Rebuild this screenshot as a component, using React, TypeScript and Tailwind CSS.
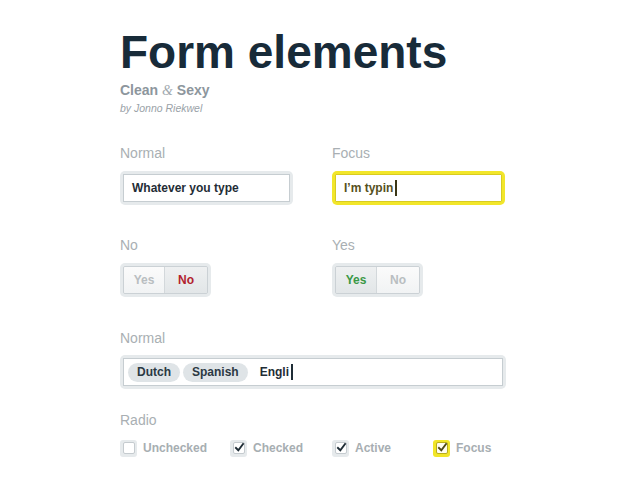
import React from "react";

function Label({ children }: { children: React.ReactNode }) {
  return <div className="text-[14px] leading-[16px] text-[#a9afb3]">{children}</div>;
}

function Caret({ color = "bg-[#1f2d36]" }: { color?: string }) {
  return <span className={`ml-[2px] inline-block h-[16px] w-[2px] ${color}`} />;
}

function Toggle({ value }: { value: "yes" | "no" }) {
  const on = "bg-gradient-to-b from-[#eef0f1] to-[#e2e6e8]";
  const off = "bg-gradient-to-b from-[#fbfbfb] to-[#f1f3f4] text-[#b9bec1]";
  return (
    <div className="w-[91px] rounded-[5px] bg-[#e6eaec] p-[3px]">
      <div className="flex h-[28px] overflow-hidden rounded-[2px] border border-[#cbd1d5] text-[12px] font-bold">
        <div
          className={`flex w-[41px] items-center justify-center border-r border-[#d3d8db] ${
            value === "yes" ? `${on} text-[#3a9845]` : off
          }`}
        >
          Yes
        </div>
        <div
          className={`flex flex-1 items-center justify-center ${
            value === "no" ? `${on} text-[#b2222e]` : off
          }`}
        >
          No
        </div>
      </div>
    </div>
  );
}

function Check({ checked, focus }: { checked?: boolean; focus?: boolean }) {
  return (
    <div
      className={`flex h-[17px] w-[17px] items-center justify-center rounded-[3px] ${
        focus ? "bg-[#f1e527]" : "bg-[#e6eaec]"
      }`}
    >
      <div
        className={`relative h-[12px] w-[12px] rounded-[2px] border ${
          focus ? "border-[#b9ad1c] bg-[#fffdf0]" : "border-[#c5cbcf] bg-white"
        }`}
      >
        {checked && (
          <svg viewBox="0 0 14 14" className="absolute -top-[1px] left-[0px] h-[11px] w-[11px]">
            <path
              d="M2.5 7.5 L5.5 10.5 L11.5 2.5"
              fill="none"
              stroke={focus ? "#4e4718" : "#1f2d36"}
              strokeWidth="2.4"
              strokeLinecap="square"
            />
          </svg>
        )}
      </div>
    </div>
  );
}

function Tag({ children }: { children: React.ReactNode }) {
  return (
    <span className="flex h-[19px] items-center rounded-full bg-[#dfe4e7] px-[9px] text-[12px] font-bold text-[#2b3943]">
      {children}
    </span>
  );
}

export default function App() {
  return (
    <div className="min-h-screen bg-white font-['Liberation_Sans',Arial,sans-serif]">
      <div className="ml-[120px] w-[386px] pt-[29px]">
        <h1 className="text-[46px] font-bold leading-[46px] text-[#182b39]">Form elements</h1>
        <div className="mt-[7px] text-[14px] font-bold leading-[16px] text-[#8d969d]">
          Clean{" "}
          <span className="font-['Liberation_Serif',serif] font-normal italic text-[#a2aab0]">&amp;</span>{" "}
          Sexy
        </div>
        <div className="mt-[3px] text-[10.5px] italic leading-[13px] text-[#9aa2a8]">by Jonno Riekwel</div>

        <div className="mt-[30px] grid grid-cols-[173px_173px] gap-x-[39px]">
          <div>
            <Label>Normal</Label>
            <div className="mt-[10px] rounded-[5px] bg-[#e6eaec] p-[3px]">
              <div className="flex h-[28px] items-center border border-[#c6cdd1] bg-white pl-[8px] text-[12px] font-bold text-[#1f2d36]">
                Whatever you type
              </div>
            </div>
          </div>
          <div>
            <Label>Focus</Label>
            <div className="mt-[10px] rounded-[5px] bg-[#f2e62a] p-[3px]">
              <div className="flex h-[28px] items-center rounded-[1px] border border-[#d8cc22] bg-white pl-[8px] text-[12px] font-bold text-[#555021]">
                I’m typin
                <Caret color="bg-[#3a3617]" />
              </div>
            </div>
          </div>

          <div className="mt-[32px]">
            <Label>No</Label>
            <div className="mt-[10px]">
              <Toggle value="no" />
            </div>
          </div>
          <div className="mt-[32px]">
            <Label>Yes</Label>
            <div className="mt-[10px]">
              <Toggle value="yes" />
            </div>
          </div>
        </div>

        <div className="mt-[33px]">
          <Label>Normal</Label>
          <div className="mt-[9px] rounded-[5px] bg-[#e6eaec] p-[3px]">
            <div className="flex h-[28px] items-center gap-[3px] border border-[#c6cdd1] bg-white pl-[4px]">
              <Tag>Dutch</Tag>
              <Tag>Spanish</Tag>
              <span className="ml-[9px] flex items-center text-[12px] font-bold text-[#1f2d36]">
                Engli
                <Caret />
              </span>
            </div>
          </div>
        </div>

        <div className="mt-[23px]">
          <Label>Radio</Label>
          <div className="mt-[11px] grid grid-cols-[110px_102px_101px_auto] text-[12px] font-bold text-[#a7aeb2]">
            <div className="flex items-center gap-[6px]">
              <Check />
              Unchecked
            </div>
            <div className="flex items-center gap-[6px]">
              <Check checked />
              Checked
            </div>
            <div className="flex items-center gap-[6px]">
              <Check checked />
              Active
            </div>
            <div className="flex items-center gap-[6px]">
              <Check checked focus />
              Focus
            </div>
          </div>
        </div>
      </div>
    </div>
  );
}
